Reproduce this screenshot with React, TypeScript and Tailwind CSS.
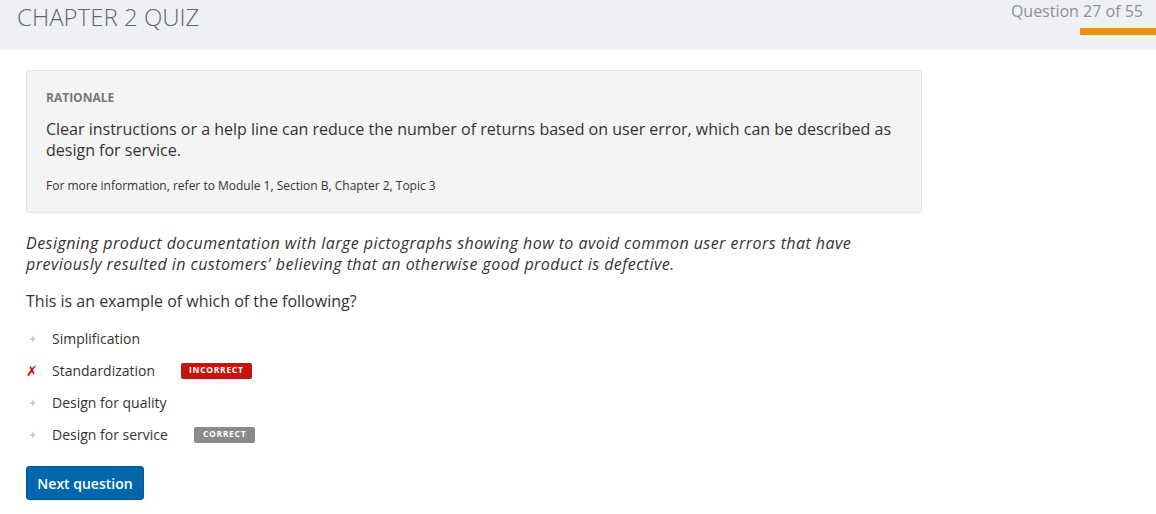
import React from "react";

const options = [
  { label: "Simplification", mark: "bullet" as const, badge: null as null | "incorrect" | "correct" },
  { label: "Standardization", mark: "x" as const, badge: "incorrect" as const },
  { label: "Design for quality", mark: "bullet" as const, badge: null },
  { label: "Design for service", mark: "bullet" as const, badge: "correct" as const },
];

function Bullet() {
  return (
    <svg width="8" height="8" viewBox="0 0 8 8" className="block">
      <path d="M4 0.5 L5 3 L7.5 4 L5 5 L4 7.5 L3 5 L0.5 4 L3 3 Z" fill="#c4c4c4" />
    </svg>
  );
}

export default function App() {
  return (
    <div className="w-[1156px] h-[514px] bg-white text-[#333] overflow-hidden" style={{ fontFamily: '"Open Sans", sans-serif' }}>
      <header className="h-[50px] bg-[#eff0f4] flex justify-between">
        <h1 className="pl-[17px] pt-[1px] text-[24px] leading-[32px] font-light text-[#5f6670]">CHAPTER 2 QUIZ</h1>
        <div className="flex flex-col items-end">
          <div className="pr-[13px] text-[16px] leading-[22px] text-[#8c9199]">Question 27 of 55</div>
          <div className="mt-[6px] w-[76px] h-[7px] bg-[#f28c1e]"></div>
        </div>
      </header>

      <main className="pl-[26px] pt-[20px]">
        <section className="w-[896px] bg-[#f4f4f4] border border-[#e3e3e3] rounded-[3px] px-[19px] pt-[18px] pb-[17px]">
          <div className="text-[12px] leading-[18px] font-bold text-[#777]">RATIONALE</div>
          <p className="mt-[12px] text-[16px] leading-[21px] text-[#333]">
            Clear instructions or a help line can reduce the number of returns based on user error, which can be described as design for service.
          </p>
          <p className="mt-[16px] text-[12px] leading-[18px] text-[#333]">
            For more information, refer to Module 1, Section B, Chapter 2, Topic 3
          </p>
        </section>

        <p className="mt-[20px] w-[860px] text-[16px] leading-[21px] italic tracking-[0.45px] text-[#333]">
          Designing product documentation with large pictographs showing how to avoid common user errors that have previously resulted in customers' believing that an otherwise good product is defective.
        </p>
        <p className="mt-[16px] text-[16px] leading-[21px] text-[#333]">This is an example of which of the following?</p>

        <ul className="mt-[16px] flex flex-col gap-[11px]">
          {options.map((o) => (
            <li key={o.label} className="flex items-center h-[21px]">
              <span className="w-[26px] flex items-center">
                {o.mark === "x" ? (
                  <span className="text-[14px] leading-[14px] text-[#e00000] font-bold italic" style={{ fontFamily: '"DejaVu Sans", sans-serif' }}>✗</span>
                ) : (
                  <span className="pl-[3px]"><Bullet /></span>
                )}
              </span>
              <span className="text-[14px] leading-[21px] text-[#333]">{o.label}</span>
              {o.badge === "incorrect" && (
                <span className="ml-[26px] h-[16px] px-[8px] rounded-[2px] bg-[#c4150c] text-white text-[8.5px] font-bold tracking-[0.7px] flex items-center">INCORRECT</span>
              )}
              {o.badge === "correct" && (
                <span className="ml-[26px] h-[16px] px-[9px] rounded-[2px] bg-[#8a8a8a] text-white text-[8.5px] font-bold tracking-[0.7px] flex items-center">CORRECT</span>
              )}
            </li>
          ))}
        </ul>

        <button className="mt-[21px] w-[118px] h-[34px] rounded-[3px] bg-[#0067ac] border border-[#005a96] text-white text-[14px] font-semibold">
          Next question
        </button>
      </main>
    </div>
  );
}
